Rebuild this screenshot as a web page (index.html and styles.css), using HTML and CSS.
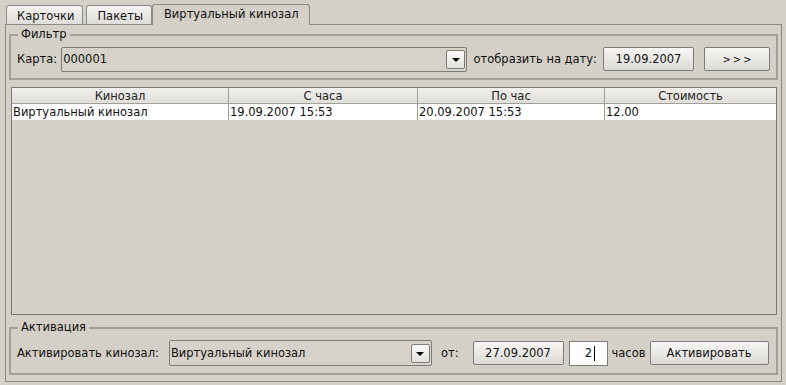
FILE: index.html
```html
<!DOCTYPE html>
<html lang="ru">

<head>
    <meta charset="UTF-8">
    <title>Виртуальный кинозал</title>
    <link rel="stylesheet" href="styles.css">
</head>

<body>
    <div class="window">
        <div class="tabs">
            <div class="tab">Карточки</div>
            <div class="tab">Пакеты</div>
            <div class="tab active">Виртуальный кинозал</div>
        </div>
        <div class="panel">
            <fieldset class="group filter">
                <legend>Фильтр</legend>
                <div class="row">
                    <span class="label">Карта:</span>
                    <div class="combo card-combo">
                        <span class="combo-text">000001</span>
                        <span class="combo-btn"><span class="arrow"></span></span>
                    </div>
                    <span class="label date-label">отобразить на дату:</span>
                    <button class="btn date-btn">19.09.2007</button>
                    <button class="btn next-btn">&gt;&gt;&gt;</button>
                </div>
            </fieldset>

            <div class="grid">
                <table>
                    <thead>
                        <tr>
                            <th class="col-hall">Кинозал</th>
                            <th class="col-from">С часа</th>
                            <th class="col-to">По час</th>
                            <th>Стоимость</th>
                        </tr>
                    </thead>
                    <tbody>
                        <tr>
                            <td>Виртуальный кинозал</td>
                            <td>19.09.2007 15:53</td>
                            <td>20.09.2007 15:53</td>
                            <td>12.00</td>
                        </tr>
                    </tbody>
                </table>
            </div>

            <fieldset class="group activation">
                <legend>Активация</legend>
                <div class="row">
                    <span class="label">Активировать кинозал:</span>
                    <div class="combo hall-combo">
                        <span class="combo-text">Виртуальный кинозал</span>
                        <span class="combo-btn"><span class="arrow"></span></span>
                    </div>
                    <span class="label from-label">от:</span>
                    <button class="btn act-date">27.09.2007</button>
                    <div class="hours-input">2<span class="caret"></span></div>
                    <span class="label hours-label">часов</span>
                    <button class="btn activate-btn">Активировать</button>
                </div>
            </fieldset>
        </div>
    </div>
</body>

</html>
```

FILE: styles.css
```css
html,
body {
    margin: 0;
    height: 100%;
}

body {
    font-family: "DejaVu Sans", sans-serif;
    font-size: 11.5px;
    color: #111;
    background-color: #d4d0c8;
}

.window {
    height: 385px;
    box-sizing: border-box;
    padding: 3px 4px 3px 5px;
    display: flex;
    flex-direction: column;
}

/* tabs */
.tabs {
    display: flex;
    align-items: flex-end;
    height: 21px;
    padding-left: 1px;
    position: relative;
    z-index: 1;
}

.tab {
    height: 18px;
    line-height: 20px;
    padding: 0 8px 0 10px;
    margin-right: 3px;
    border: 1px solid #8c8a85;
    border-bottom: none;
    border-radius: 3px 3px 0 0;
    background: linear-gradient(#f4f3f1, #dfddd8);
}

.tab:nth-child(2) {
    margin-right: 1px;
}

.tab.active {
    height: 20px;
    line-height: 19px;
    padding: 0 10px 0 11px;
    margin-right: 0;
    margin-left: -1px;
    background: #d4d0c8;
    margin-bottom: -1px;
}

.panel {
    flex: 1;
    border: 1px solid #8c8a85;
    padding: 3px 3px 6px 3px;
    display: flex;
    flex-direction: column;
}

/* group boxes */
.group {
    margin: 0;
    border: 2px solid #a3a09a;
    padding: 5px 6px 6px 6px;
}

.group legend {
    padding: 0 3px;
    margin-left: 1px;
    line-height: 13px;
}

.row {
    display: flex;
    align-items: center;
    height: 26px;
}

.label {
    white-space: nowrap;
}

/* combo box */
.combo {
    height: 25px;
    box-sizing: border-box;
    border: 1px solid #7e7c77;
    border-radius: 2px;
    background: #d6d2ca;
    display: flex;
    align-items: center;
    padding: 0 1px 0 1px;
}

.combo-text {
    flex: 1;
}

.combo-btn {
    width: 17px;
    height: 17px;
    border: 1px solid #7e7c77;
    border-radius: 2px;
    background: linear-gradient(#fbfbfa, #e2e0db);
    display: flex;
    align-items: center;
    justify-content: center;
}

.arrow {
    width: 0;
    height: 0;
    border-left: 4px solid transparent;
    border-right: 4px solid transparent;
    border-top: 4px solid #000;
    margin-top: 1px;
}

.card-combo {
    flex: 1;
    margin-left: 4px;
}

.date-label {
    margin-left: 6px;
}

/* buttons */
.btn {
    font-family: inherit;
    font-size: 11.5px;
    color: #111;
    height: 24px;
    padding: 0;
    border: 1px solid #7e7c77;
    border-radius: 2px;
    background: linear-gradient(#f7f6f4, #dcdad5);
}

.date-btn {
    width: 91px;
    margin-left: 6px;
}

.next-btn {
    width: 66px;
    margin-left: 10px;
    font-size: 10px;
    letter-spacing: 2px;
    padding-left: 2px;
}

/* table */
.grid {
    flex: 1;
    margin: 7px 1px 6px 2px;
    border: 1px solid #7a7873;
    background: #d4d0c8;
}

table {
    width: 100%;
    border-collapse: collapse;
    table-layout: fixed;
}

th {
    height: 15px;
    padding: 0;
    font-weight: normal;
    color: #222;
    text-align: center;
    line-height: 14px;
    background: linear-gradient(#f0efec, #e0ded9);
    border-right: 1px solid #a19f99;
    border-bottom: 1px solid #a19f99;
}

td {
    height: 16px;
    padding: 0 0 0 1px;
    line-height: 15px;
    background: #fff;
    border-right: 1px solid #a19f99;
    border-bottom: 1px solid #d0cec8;
    white-space: nowrap;
    overflow: hidden;
}

th:last-child,
td:last-child {
    border-right: none;
}

.col-hall {
    width: 216px;
}

.col-from {
    width: 188px;
}

.col-to {
    width: 186px;
}

/* activation row */
.activation .row {
    height: 28px;
}

.hall-combo {
    width: 263px;
    margin-left: 10px;
    height: 26px;
}

.from-label {
    margin-left: 9px;
}

.act-date {
    width: 91px;
    margin-left: 14px;
}

.hours-input {
    width: 39px;
    height: 25px;
    box-sizing: border-box;
    margin-left: 5px;
    border: 1px solid #7e7c77;
    background: #fff;
    display: flex;
    align-items: center;
    justify-content: center;
    padding-left: 4px;
}

.caret {
    width: 1px;
    height: 15px;
    background: #000;
    margin-left: 2px;
}

.hours-label {
    margin-left: 4px;
}

.activate-btn {
    width: 119px;
    margin-left: 4px;
}
```
